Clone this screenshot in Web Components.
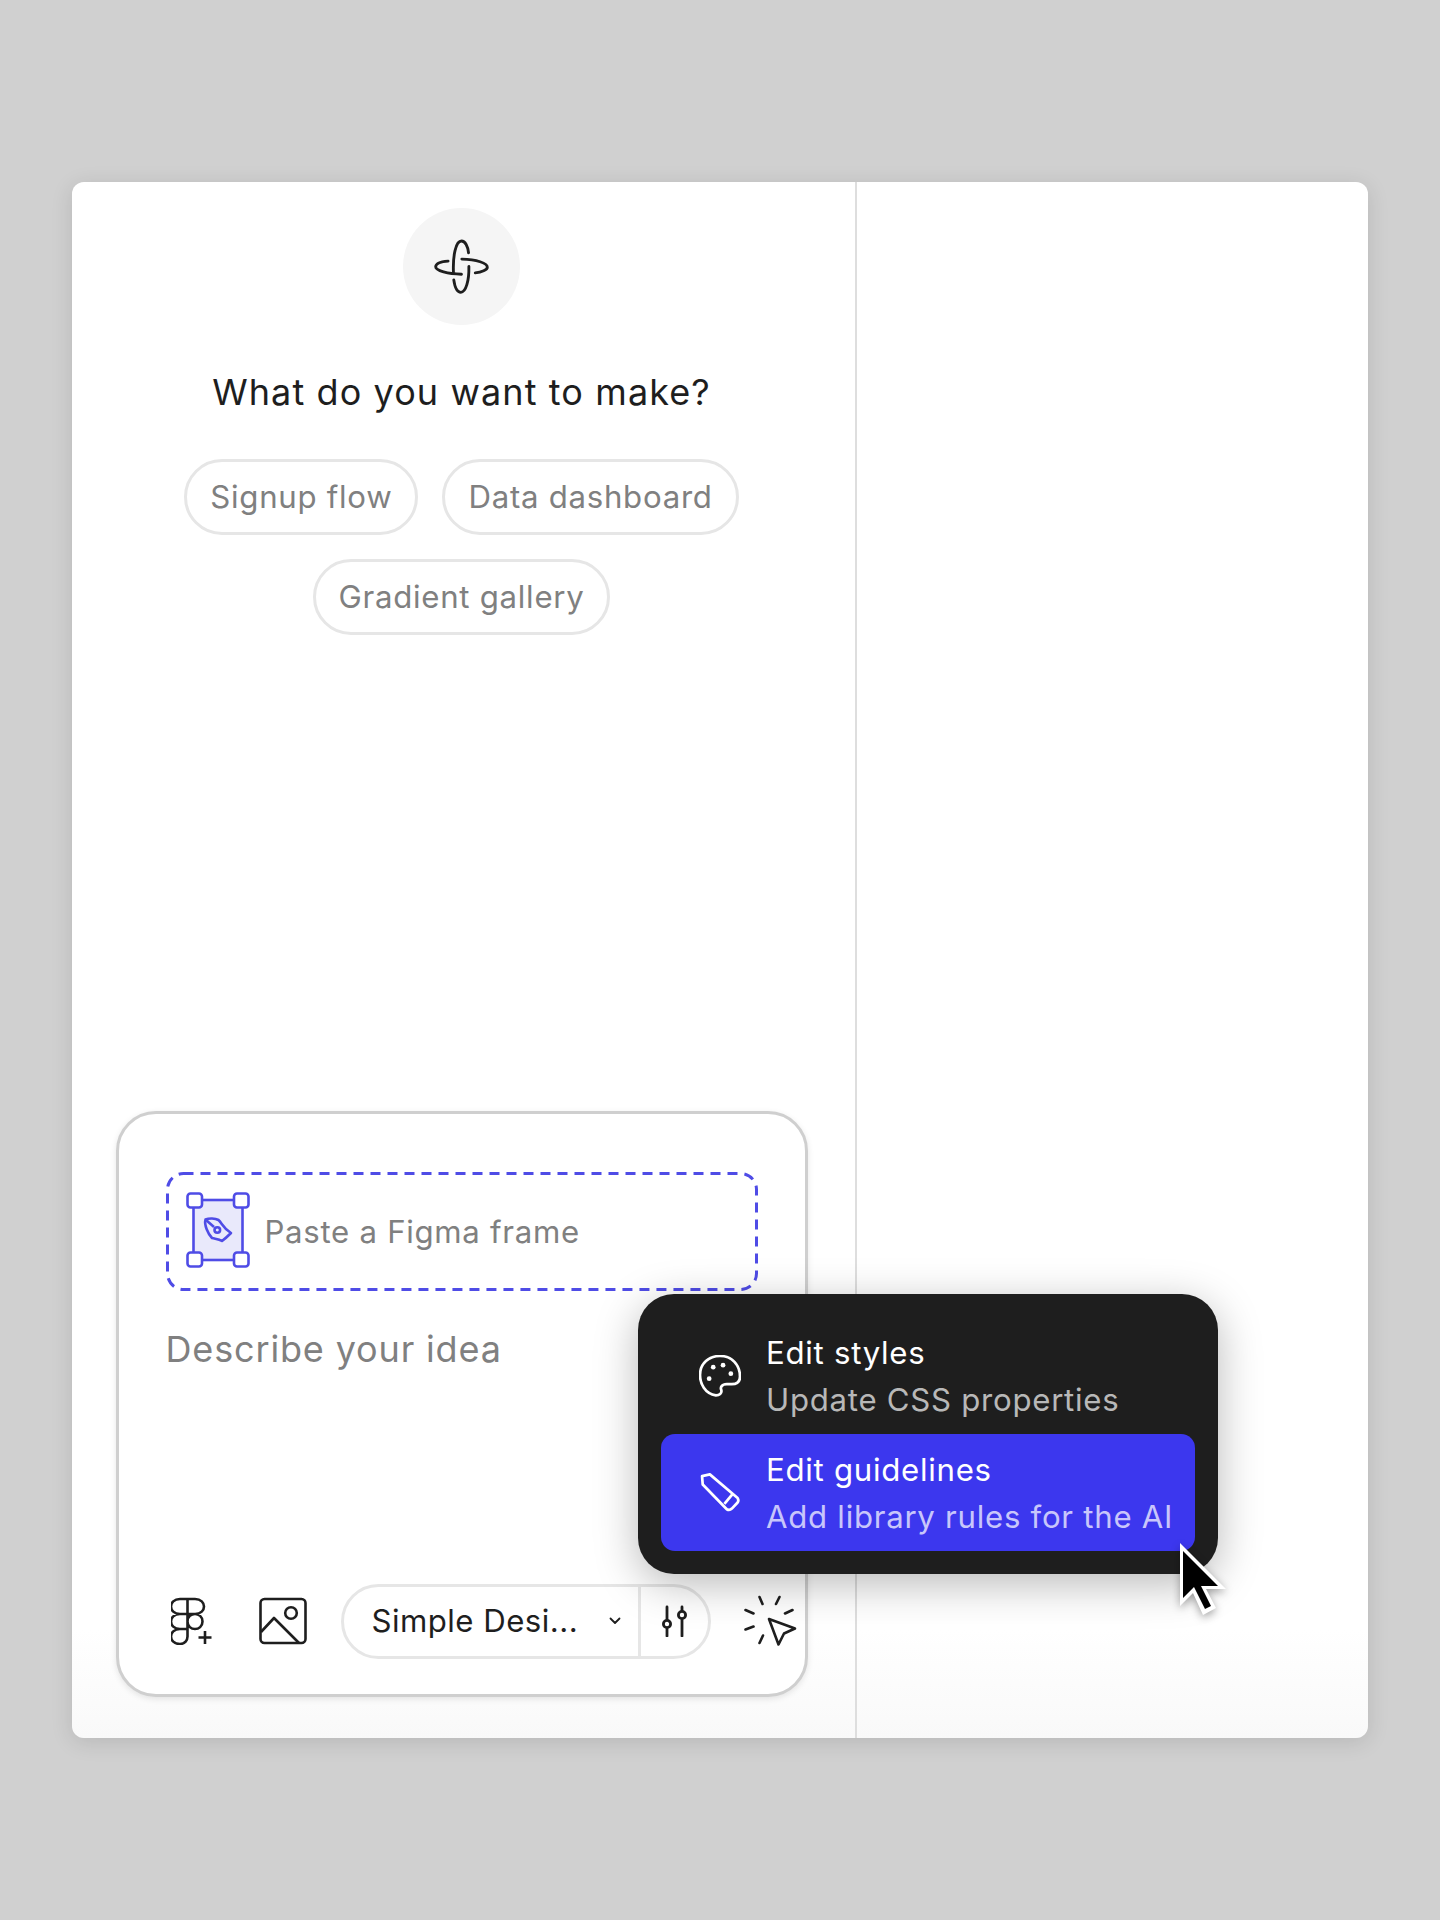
<!DOCTYPE html>
<html lang="en">
<head>
<meta charset="utf-8">
<title>Make</title>
<style>
html,body{margin:0;padding:0}
body{background:#d0d0d0;font-family:Inter,"Liberation Sans",sans-serif;height:1920px;box-sizing:border-box;padding:182px 72px 0;color:#1e1e1e}
</style>
</head>
<body>
<app-window>
  <logo-badge slot="left"></logo-badge>
  <h-title slot="left">What do you want to make?</h-title>
  <chip-list slot="left">
    <sug-chip>Signup flow</sug-chip>
    <sug-chip>Data dashboard</sug-chip>
    <sug-chip>Gradient gallery</sug-chip>
  </chip-list>
  <prompt-box slot="left"></prompt-box>
  <menu-popup slot="over">
    <menu-item title-text="Edit styles" sub="Update CSS properties" icon="palette"></menu-item>
    <menu-item title-text="Edit guidelines" sub="Add library rules for the AI" icon="pencil" active></menu-item>
  </menu-popup>
  <mouse-cursor slot="over"></mouse-cursor>
</app-window>
<script>
function def(name, html){
  customElements.define(name, class extends HTMLElement{
    constructor(){super();this.attachShadow({mode:'open'});}
    connectedCallback(){
      this.shadowRoot.innerHTML = typeof html==='function'?html(this):html;
    }
  });
}
def('app-window',`<style>
:host{display:block;position:relative;width:1296px;height:1556px;border-radius:12px;
background:linear-gradient(#fff 0,#fff 93%,#f9f9f9 100%);box-shadow:0 4px 22px rgba(0,0,0,.12)}
.g{display:grid;grid-template-columns:785px 1fr;height:100%}
.l{display:flex;flex-direction:column;align-items:center;border-right:2px solid #dedede;padding:26px 4px 0 0;box-sizing:border-box;height:100%}
</style><div class="g"><div class="l"><slot name="left"></slot></div><div></div></div><slot name="over"></slot>`);
def('logo-badge',`<style>:host{display:flex;width:117px;height:117px;border-radius:50%;background:#f5f5f5;align-items:center;justify-content:center}</style>
<svg width="57" height="57" viewBox="160 143 170 170" fill="none" stroke="#1e1e1e" stroke-width="8.500" stroke-linecap="round">
<path d="M205 212C180 214 168 221 168 229C168 241 205 250 245 251"/>
<path d="M221 245C219 195 228 152 245 152C256 152 264 168 266 187"/>
<path d="M246 206C290 207 322 218 322 230C322 238 305 245 286 247"/>
<path d="M267 228C268 270 258 305 243 305C233 305 225 290 222 268"/>
</svg>`);
def('h-title',`<style>:host{display:block;margin-top:43px;font:400 36px/48px Inter,sans-serif;letter-spacing:1.1px;color:#1e1e1e;text-align:center}</style><slot></slot>`);
def('chip-list',`<style>:host{display:flex;flex-wrap:wrap;justify-content:center;gap:24px;width:600px;margin-top:43px}</style><slot></slot>`);
def('sug-chip',`<style>:host{display:flex;align-items:center;box-sizing:border-box;height:76px;padding:0 23px;border:3px solid #e6e6e6;border-radius:38px;font:400 31.200px Inter,sans-serif;letter-spacing:.72px;color:#808080;background:#fff}</style><slot></slot>`);
def('prompt-box',`<style>
:host{display:flex;flex-direction:column;box-sizing:border-box;width:692px;height:586px;margin-top:auto;margin-bottom:41px;border:3px solid #cfcfcf;border-radius:40px;padding:58px 47px 36px;background:#fff;box-shadow:0 2px 6px rgba(0,0,0,.1)}
.ph{margin-top:32px;font:400 36px/52px Inter,sans-serif;letter-spacing:.85px;color:#808080}
.sp{flex:1}
</style><figma-drop></figma-drop><div class="ph">Describe your idea</div><div class="sp"></div><tool-bar></tool-bar>`);
def('figma-drop',`<style>
:host{display:flex;align-items:center;gap:15px;box-sizing:border-box;height:119px;padding:0 20px;position:relative;font:400 31.200px Inter,sans-serif;letter-spacing:.7px;color:#808080}
svg{display:block}
svg.d{position:absolute;left:0;top:0}
svg.f{margin-top:-3px}
</style><svg class="d" width="592" height="119" fill="none"><rect x="1.500" y="1.500" width="589" height="116" rx="16" stroke="#4f4ce6" stroke-width="3" stroke-dasharray="10 7"/></svg>
<svg class="f" width="64" height="76" viewBox="186 1192 64 76" fill="none" stroke="#4f4ce6" stroke-width="2.600">
<rect x="193.500" y="1200" width="49" height="60" fill="#e9e9fb"/>
<rect x="187.500" y="1193.500" width="14.500" height="14" rx="3" fill="#fff"/>
<rect x="234" y="1193.500" width="14.500" height="14" rx="3" fill="#fff"/>
<rect x="187.500" y="1252.500" width="14.500" height="14" rx="3" fill="#fff"/>
<rect x="234" y="1252.500" width="14.500" height="14" rx="3" fill="#fff"/>
<path stroke-linejoin="round" d="M205.500 1219.500C209 1218 215 1218 218.500 1220C222 1223 223 1228 231 1233C229 1235 226 1238 222 1241C219 1239 216 1239 212 1238C208 1234 204 1225 205.500 1219.500Z"/>
<path d="M206 1220L214 1227"/><circle cx="217.300" cy="1230" r="2.800"/>
</svg><span>Paste a Figma frame</span>`);
def('tool-bar',`<style>
:host{display:flex;align-items:center;height:74px;position:relative}
svg{display:block;flex:none}
</style>
<svg style="margin-left:5px" width="45" height="48" viewBox="171 1597 45 48" fill="none" stroke="#1e1e1e" stroke-width="2.600">
<path d="M187.500 1599H180C168 1599 168 1614 180 1614H187.500ZM187.500 1599H195C207 1599 207 1614 195 1614H187.500ZM187.500 1614H180C168 1614 168 1629 180 1629H187.500ZM187.500 1629H180C168 1629 168 1644 180 1644C185 1644 187.500 1640 187.500 1636.500ZM187.500 1621.500C187.500 1611.500 202.500 1611.500 202.500 1621.500C202.500 1631.500 187.500 1631.500 187.500 1621.500Z"/>
<path d="M205 1631V1644M198.500 1637.500H211.500"/></svg>
<svg style="margin-left:43px" width="48" height="48" viewBox="258 1597 48 48" fill="none" stroke="#1e1e1e" stroke-width="2.600" stroke-linejoin="round">
<rect x="259.500" y="1599" width="45" height="44" rx="4"/><circle cx="290" cy="1613" r="5.800"/><path d="M260 1632L273 1618L298 1643"/></svg>
<design-select style="margin-left:34px"></design-select>
<svg style="margin-left:33px;margin-top:-2px" width="54" height="54" viewBox="744 1594 54 54" fill="none" stroke="#1e1e1e" stroke-width="2.600" stroke-linecap="round" stroke-linejoin="round">
<path d="M759.500 1598L762.500 1605M779.500 1598L776 1605M745.500 1611L753.500 1614.500M792.500 1611L785 1614.500M745.500 1630.500L753.500 1627.500M759.500 1644L763 1636.500"/>
<path d="M769 1620L795 1629.500L784 1634.500L778.500 1645.500Z"/></svg>`);
def('design-select',`<style>
:host{display:flex;align-items:center;box-sizing:border-box;width:370px;height:75px;border:3px solid #e6e6e6;border-radius:38px;font:400 31.200px Inter,sans-serif;letter-spacing:.46px;color:#1e1e1e;flex:none}
.t{padding-left:28px;width:236px;box-sizing:border-box;white-space:nowrap;flex:none}
.c{width:58px;display:flex;align-items:center;padding-left:29px;box-sizing:border-box;flex:none}
.s{flex:1;align-self:stretch;border-left:3px solid #e6e6e6;display:flex;align-items:center;padding-left:21px}
svg{display:block}
</style><div class="t">Simple Desi...</div><div class="c"><svg width="12" height="8" viewBox="0 0 12 8" fill="none" stroke="#1e1e1e" stroke-width="1.800" stroke-linecap="round" stroke-linejoin="round"><path d="M1.500 1.500L6 6L10.500 1.500"/></svg></div>
<div class="s"><svg width="26" height="32" viewBox="0 0 26 32" fill="none" stroke="#1e1e1e" stroke-width="2.800" stroke-linecap="round"><path d="M5 2V14M5 24V31M20 2V5M20 15V31"/><circle cx="5" cy="19" r="3.600"/><circle cx="20" cy="10" r="3.600"/></svg></div>`);
def('menu-popup',`<style>
:host{position:absolute;left:566px;top:1112px;width:580px;height:280px;box-sizing:border-box;padding:23px;background:#1e1e1e;border-radius:36px;display:flex;flex-direction:column;box-shadow:0 10px 44px rgba(0,0,0,.28)}
</style><slot></slot>`);
const icons={
palette:`<svg width="42" height="42" viewBox="208 226 124 124" fill="none" stroke="#fff" stroke-width="8" stroke-linejoin="round"><path d="M258 345C225 340 211 310 211 285C211 250 238 229 270 229C305 229 329 255 329 290C329 305 320 312 305 312H290C275 312 270 322 274 330C276 340 268 345 258 345Z"/><g fill="#fff" stroke="none"><circle cx="250" cy="262" r="7"/><circle cx="279" cy="256" r="7"/><circle cx="302" cy="281" r="7"/><circle cx="238" cy="296" r="7"/></g></svg>`,
pencil:`<svg width="42" height="42" viewBox="208 578 124 124" fill="none" stroke="#fff" stroke-width="8" stroke-linejoin="round"><path d="M217 590L240 585L322 655C325 660 325 664 322 668L305 686C300 691 295 691 290 688L219 615Z"/><path d="M307 643L283 672"/></svg>`};
def('menu-item',h=>`<style>
:host{display:flex;align-items:center;box-sizing:border-box;height:117px;flex:none;border-radius:14px;padding:0 23px 0 38px;${h.hasAttribute('active')?'background:#3c37ee;':''}}
svg{display:block;flex:none;margin-right:25px}
.w{padding-top:1px}
.a,.b{font:400 31.200px/46px Inter,sans-serif;letter-spacing:.72px;white-space:nowrap}
.a{color:#fff}
.b{color:${h.hasAttribute('active')?'#c8c6fb':'#b8b8b8'};margin-top:1px}
</style>${icons[h.getAttribute('icon')]}<div class="w"><div class="a">${h.getAttribute('title-text')}</div><div class="b">${h.getAttribute('sub')}</div></div>`);
def('mouse-cursor',`<style>:host{position:absolute;left:1106px;top:1358px;display:block;width:54px;height:80px;filter:drop-shadow(0 3px 4px rgba(0,0,0,.35))}svg{display:block}</style>
<svg width="54" height="80" viewBox="0 0 54 80"><path fill="#fff" d="M2 3L48 49H28L38 68L25 75L15 53L2 66Z"/><path fill="#000" d="M5 11L40 46H23L33 66L27 69L16 47L5 58Z"/></svg>`);
</script>
</body>
</html>
